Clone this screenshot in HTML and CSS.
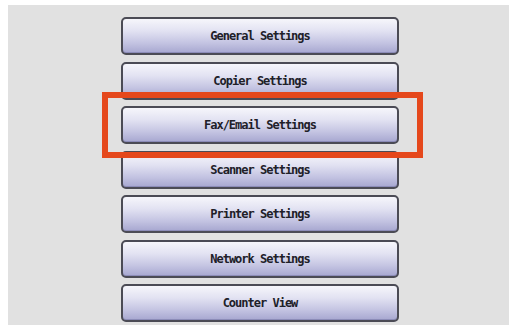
FILE: index.html
```html
<!DOCTYPE html>
<html>
<head>
<meta charset="utf-8">
<link rel="stylesheet" href="styles.css">
</head>
<body>
<div class="panel">
  <div class="menu">
    <div class="btn">General Settings</div>
    <div class="btn">Copier Settings</div>
    <div class="btn">Fax/Email Settings</div>
    <div class="btn">Scanner Settings</div>
    <div class="btn">Printer Settings</div>
    <div class="btn">Network Settings</div>
    <div class="btn">Counter View</div>
  </div>
  <div class="highlight"></div>
</div>
</body>
</html>
```
FILE: styles.css
```css
html, body {
  margin: 0;
  padding: 0;
  background: #ffffff;
}
body {
  width: 515px;
  height: 329px;
  overflow: hidden;
}
.panel {
  position: relative;
  margin: 5px 0 0 8px;
  width: 501px;
  height: 320px;
  background: #e1e1e1;
  box-sizing: border-box;
  padding: 12px 0 0 113px;
}
.menu {
  width: 278px;
  display: flex;
  flex-direction: column;
  gap: 6.5px;
}
.btn {
  height: 38px;
  box-sizing: border-box;
  border: 2px solid #4b4b55;
  border-radius: 5px;
  background: linear-gradient(to bottom, #f6f6fb 0%, #e2e2f2 35%, #c4c4e2 70%, #a7a7d0 100%);
  box-shadow: inset 0 -1px 0 #8c8cb8;
  display: flex;
  align-items: center;
  justify-content: center;
  font-family: "DejaVu Sans Mono", "Liberation Mono", monospace;
  font-weight: bold;
  font-size: 12px;
  letter-spacing: -1px;
  color: #202028;
}
.highlight {
  position: absolute;
  left: 94px;
  top: 87px;
  width: 321px;
  height: 66px;
  box-sizing: border-box;
  border: 6px solid #e5481c;
}
```
